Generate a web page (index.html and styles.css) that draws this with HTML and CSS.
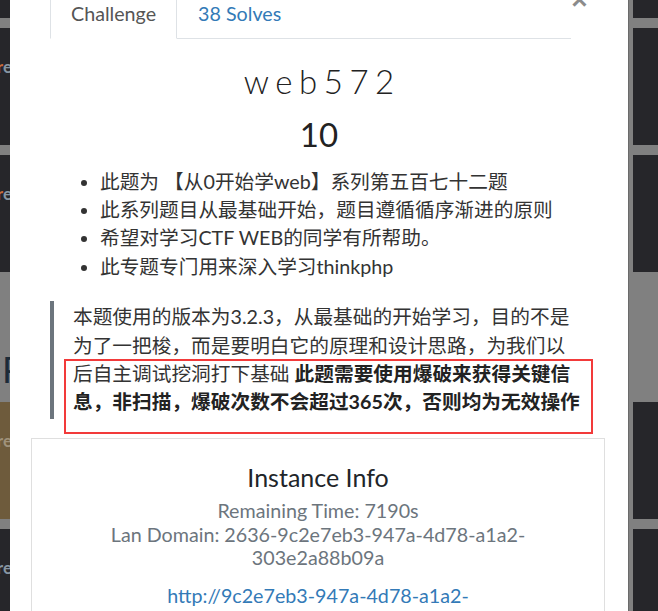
FILE: index.html
```html
<!DOCTYPE html>
<html lang="zh-CN">
<head>
<meta charset="utf-8">
<title>web572</title>
<link rel="stylesheet" href="styles.css">
</head>
<body>
<div class="backdrop">
  <div class="col col-left">
    <div class="tile"></div>
    <div class="tile"><span class="tile-label"><span class="accent">r</span>e</span></div>
    <div class="tile"><span class="tile-label"><span class="accent">r</span>e</span></div>
    <div class="cat-head">Php</div>
    <div class="tile tile-solved"><span class="tile-label">re</span></div>
    <div class="tile"><span class="tile-label">re</span></div>
  </div>
  <div class="col col-right">
    <div class="tile"></div>
    <div class="tile"></div>
    <div class="tile"></div>
    <div class="cat-head"></div>
    <div class="tile"></div>
    <div class="tile"></div>
  </div>
</div>

<div class="modal">
  <div class="modal-head">
    <nav class="nav-tabs">
      <a class="tab active">Challenge</a>
      <a class="tab">38 Solves</a>
    </nav>
    <button class="close" type="button">&times;</button>
  </div>

  <h2 class="chal-name">web572</h2>
  <h3 class="chal-value">10</h3>

  <ul class="desc-list">
    <li>此题为 【从0开始学web】系列第五百七十二题</li>
    <li>此系列题目从最基础开始，题目遵循循序渐进的原则</li>
    <li>希望对学习CTF WEB的同学有所帮助。</li>
    <li>此专题专门用来深入学习thinkphp</li>
  </ul>

  <div class="quote-wrap">
    <blockquote class="quote">本题使用的版本为3.2.3，从最基础的开始学习，目的不是为了一把梭，而是要明白它的原理和设计思路，为我们以后自主调试挖洞打下基础 <strong>此题需要使用爆破来获得关键信息，非扫描，爆破次数不会超过365次，否则均为无效操作</strong></blockquote>
    <div class="mark"></div>
  </div>

  <div class="card">
    <h4 class="card-title">Instance Info</h4>
    <p class="muted time">Remaining Time: 7190s</p>
    <p class="muted">Lan Domain: 2636-9c2e7eb3-947a-4d78-a1a2-303e2a88b09a</p>
    <p class="link-line"><a class="link">http://9c2e7eb3-947a-4d78-a1a2-303e2a88b09a.challenge.ctf.show/</a></p>
  </div>
</div>
</body>
</html>
```

FILE: styles.css
```css
html, body {
  margin: 0;
  padding: 0;
}
body {
  width: 658px;
  height: 611px;
  overflow: hidden;
  position: relative;
  background: #808080;
  font-family: Lato, "Noto Sans CJK SC", sans-serif;
}

/* ---------- dimmed page behind the modal ---------- */
.backdrop {
  display: flex;
  justify-content: space-between;
  height: 100%;
}
.col {
  display: flex;
  flex-direction: column;
  gap: 10px;
  margin-top: -99px;
}
.col-left {
  width: 40px;
}
.col-right {
  width: 25px;
}
.tile {
  height: 117px;
  background: #26262a;
  position: relative;
  flex: none;
}
.tile-solved {
  background: #6e5b3c;
}
.cat-head {
  height: 110px;
  flex: none;
  font-size: 36px;
  line-height: 1;
  padding: 69px 0 0 2px;
  box-sizing: border-box;
  color: #1d2b38;
  font-weight: 400;
}
.col-left .tile {
  display: flex;
  justify-content: flex-end;
  padding-top: 30px;
  box-sizing: border-box;
}
.tile-label {
  display: block;
  margin-right: 28px;
  font-size: 17px;
  font-weight: 700;
  color: #8796a3;
  line-height: 1;
}
.tile-solved .tile-label {
  color: #9f927b;
}
.accent {
  color: #c76b3b;
}

/* ---------- modal ---------- */
.modal {
  position: absolute;
  left: 10px;
  top: -9px;
  width: 619px;
  height: 640px;
  box-sizing: border-box;
  background: #fff;
  border-right: 1px solid #6a6a6a;
  padding: 0 40px 0 40px;
  color: #333;
  font-size: 19.7px;
  line-height: 28.4px;
}
.modal-head {
  display: flex;
  align-items: flex-start;
}
.nav-tabs {
  flex: 1;
  display: flex;
  border-bottom: 1px solid #dee2e6;
}
.tab {
  display: block;
  margin-bottom: -1px;
  padding: 7px 20px 9px;
  line-height: 29.5px;
  border: 1px solid transparent;
  color: #337ab7;
  font-size: 19.7px;
}
.tab.active {
  color: #555;
  background: #fff;
  border-color: #dee2e6 #dee2e6 #fff;
}
.close {
  width: 17px;
  padding: 0;
  margin-top: -5px;
  border: 0;
  background: none;
  font-family: "Liberation Sans", sans-serif;
  font-size: 28px;
  font-weight: 700;
  line-height: 1;
  color: #000;
  opacity: .45;
}

.chal-name {
  margin: 22px 0 0;
  text-align: center;
  font-weight: 300;
  font-size: 33px;
  letter-spacing: 6.5px;
  text-indent: 6.5px;
  line-height: 40px;
  color: #222;
}
.chal-value {
  margin: 13px 0 0;
  text-align: center;
  font-weight: 400;
  font-size: 33px;
  line-height: 40px;
  color: #222;
}

.desc-list {
  margin: 14px 0 0;
  padding-left: 50px;
}

.quote-wrap {
  position: relative;
  margin-top: 20px;
}
.quote {
  margin: 0;
  padding: 2px 4px 2px 19px;
  border-left: 4px solid #6c757d;
}
.quote strong {
  font-weight: 700;
  color: #222;
}
.mark {
  position: absolute;
  left: 14px;
  top: 58px;
  width: 529px;
  height: 75px;
  box-sizing: border-box;
  border: 2px solid #f23a3a;
}

.card {
  margin: 19px -17px 0 -19px;
  border: 1px solid #dfdfdf;
  padding: 23px 40px 0;
  text-align: center;
}
.card-title {
  margin: 0 0 8px;
  font-size: 25px;
  font-weight: 400;
  line-height: 30px;
  color: #212529;
}
.muted {
  margin: 0;
  color: #6c757d;
  line-height: 22.5px;
}
.muted.time {
  margin-bottom: 2px;
}
.link-line {
  margin: 13px 0 0;
}
.link {
  color: #337ab7;
}
```
